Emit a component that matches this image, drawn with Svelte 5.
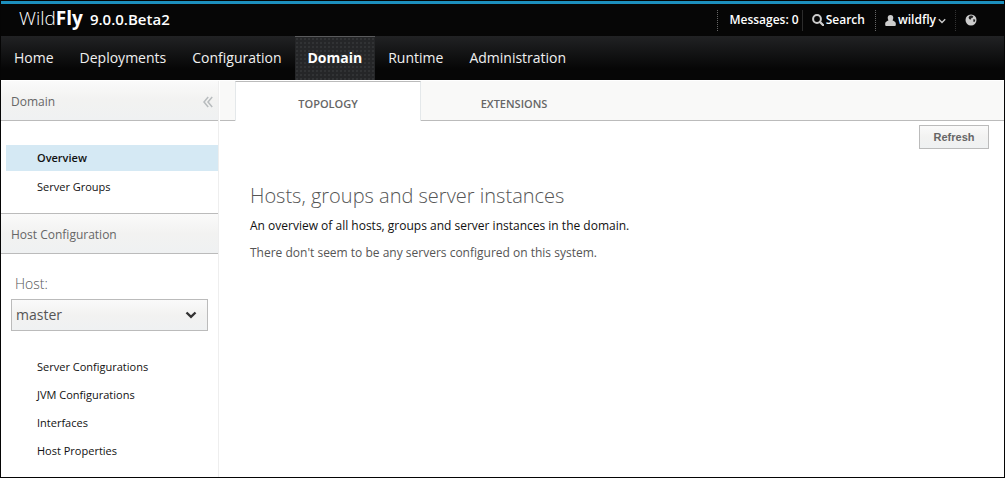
<script>
  const navItems = ['Home', 'Deployments', 'Configuration', 'Domain', 'Runtime', 'Administration'];
  const hostItems = ['Server Configurations', 'JVM Configurations', 'Interfaces', 'Host Properties'];
  const domainItems = ['Overview', 'Server Groups'];
  let section = $state('Domain');
  let page = $state('Overview');
  let tab = $state('TOPOLOGY');
  let host = $state('master');
</script>

<div class="console">
  <header>
    <div class="topbar">
      <div class="brand">
        <span class="logo">Wild<b>Fly</b></span>
        <span class="version">9.0.0.Beta2</span>
      </div>
      <div class="tools">
        <button class="tool messages">Messages: 0</button>
        <button class="tool search">
          <svg width="12" height="12" viewBox="0 0 12 12" aria-hidden="true">
            <circle cx="5" cy="5" r="3.9" fill="none" stroke="#ccc" stroke-width="2" />
            <path d="M8 8l3 3" stroke="#ccc" stroke-width="2.4" stroke-linecap="round" />
          </svg>
          Search
        </button>
        <button class="tool user">
          <svg width="11" height="11" viewBox="0 0 11 11" aria-hidden="true">
            <path d="M5.500 0C3.600 0 2.700 1.200 2.700 2.800c0 1.100.3 1.900.8 2.500L1.500 6.500C.5 7 .2 7.800.2 8.800V10q0 .9.9.9h8.800q.9 0 .9-.9V8.800C10.800 7.800 10.500 7 9.500 6.500L7.500 5.300c.5-.6.8-1.400.8-2.500C8.300 1.200 7.400 0 5.500 0z" fill="#ccc" />
          </svg>
          <span>wildfly</span>
          <svg class="caret" width="8" height="6" viewBox="0 0 8 6" aria-hidden="true">
            <path d="M.8 1.200L4 4.400 7.200 1.200" fill="none" stroke="#ccc" stroke-width="1.400" />
          </svg>
        </button>
        <button class="tool world" aria-label="Language">
          <svg width="12" height="12" viewBox="0 0 12 12" aria-hidden="true">
            <circle cx="6" cy="6" r="5.500" fill="#ccc" />
            <path d="M4.600 1.800L7 1.400l1.300 1.200-.6 1.200-1.300.3-.5 1.300-1.500-.2-.9-1.400zM8.200 5.200l2 .3-.2 2-1.500.6z" fill="#222" />
          </svg>
        </button>
      </div>
    </div>
    <nav class="mainnav">
      {#each navItems as item}
        <a href="#{item}" class:active={section === item} onclick={() => (section = item)}>{item}</a>
      {/each}
    </nav>
  </header>

  <div class="body">
    <aside>
      <div class="panel-title">
        <span>Domain</span>
        <button class="collapse" aria-label="Collapse">
          <svg width="10" height="12" viewBox="0 0 10 12" aria-hidden="true">
            <path d="M5.200 1L1 6l4.200 5M9.200 1L5 6l4.200 5" fill="none" stroke="#b8bcbe" stroke-width="1.500" />
          </svg>
        </button>
      </div>
      <nav class="menu first">
        {#each domainItems as item}
          <a href="#{item}" class:active={page === item} onclick={() => (page = item)}>{item}</a>
        {/each}
      </nav>
      <div class="panel-title second"><span>Host Configuration</span></div>
      <div class="host">
        <label for="host">Host:</label>
        <div class="select">
          <select id="host" bind:value={host}>
            <option>master</option>
          </select>
          <svg width="12" height="8" viewBox="0 0 12 8" aria-hidden="true">
            <path d="M1.500 1.500L6 5.800l4.500-4.300" fill="none" stroke="#333" stroke-width="2.400" />
          </svg>
        </div>
      </div>
      <nav class="menu hosts">
        {#each hostItems as item}
          <a href="#{item}" class:active={page === item} onclick={() => (page = item)}>{item}</a>
        {/each}
      </nav>
    </aside>

    <main>
      <div class="tabs" role="tablist">
        {#each ['TOPOLOGY', 'EXTENSIONS'] as name}
          <button role="tab" aria-selected={tab === name} class:active={tab === name} onclick={() => (tab = name)}>{name}</button>
        {/each}
      </div>
      <div class="actions"><button class="refresh">Refresh</button></div>
      <section>
        <h1>Hosts, groups and server instances</h1>
        <p class="lead">An overview of all hosts, groups and server instances in the domain.</p>
        <p>There don't seem to be any servers configured on this system.</p>
      </section>
    </main>
  </div>
</div>

<style>
  :global(body) {
    margin: 0;
  }
  .console,
  .console * {
    box-sizing: border-box;
  }
  .console {
    display: flex;
    flex-direction: column;
    min-height: 100vh;
    border: 1px solid #050505;
    background: #fff;
    color: #111;
    font: 12px/16px 'Open Sans', sans-serif;
  }
  button,
  select {
    margin: 0;
    padding: 0;
    border: 0;
    border-radius: 0;
    background: none;
    color: inherit;
    font: inherit;
  }
  a {
    color: inherit;
    text-decoration: none;
  }
  svg {
    display: block;
    flex: none;
  }
  .topbar {
    display: flex;
    justify-content: space-between;
    height: 35px;
    border-top: 3px solid #1c8fbd;
    background: #060606;
    color: #fff;
  }
  .brand {
    display: flex;
    align-items: baseline;
    gap: 7px;
    padding-left: 18px;
  }
  .logo {
    font-size: 19px;
    line-height: 28px;
    font-weight: 300;
  }
  .logo b {
    font-weight: 700;
  }
  .version {
    font-size: 15px;
    font-weight: 600;
  }
  .tools {
    display: flex;
    align-items: center;
    padding-right: 16px;
  }
  .tool {
    display: flex;
    align-items: center;
    gap: 2px;
    height: 21px;
    font-weight: 600;
    border-left: 1px dotted #666;
  }
  .messages {
    padding: 0 3px 0 11px;
  }
  .search {
    padding: 0 10px 0 9px;
    border-left: 1px solid #2c2c2c;
  }
  .user {
    padding: 0 9px;
  }
  .caret {
    margin-top: 2px;
  }
  .world {
    padding: 0 11px 0 9px;
    border-left-color: #333;
  }
  .mainnav {
    display: flex;
    height: 44px;
    background: linear-gradient(#212224, #060606 75%);
    color: #f0f0f0;
    font-size: 14px;
    font-weight: 500;
  }
  .mainnav a {
    padding: 0 13px;
    line-height: 42px;
    border-top: 1px solid transparent;
  }
  .mainnav .active {
    border-top-color: #5a5b5d;
    background: #252628 radial-gradient(#3e3f41 20%, transparent 30%) 0 0 / 4px 4px;
    color: #fff;
    font-weight: 700;
  }
  .body {
    display: flex;
    flex: 1;
    padding-top: 1px;
  }
  aside {
    width: 218px;
    flex: none;
    border-right: 1px solid #eee;
  }
  .panel-title {
    display: flex;
    align-items: center;
    justify-content: space-between;
    height: 40px;
    padding: 2px 5px 0 10px;
    border-bottom: 1px solid #bbb;
    background: linear-gradient(#fafafa, #f2f2f1 50%, #eff1f2);
    color: #666;
  }
  .second {
    height: 41px;
    border-top: 1px solid #bbb;
  }
  .menu {
    display: flex;
    flex-direction: column;
    padding-left: 5px;
    font-size: 11px;
  }
  .menu a {
    padding-left: 31px;
    line-height: 28px;
  }
  .first {
    gap: 3px;
    padding-top: 24px;
    padding-bottom: 13px;
  }
  .first a {
    line-height: 26px;
  }
  .menu .active {
    background: #d5e9f4;
    font-weight: 600;
  }
  .host {
    padding: 20px 10px 22px;
    color: #555;
    font-size: 14px;
  }
  .host label {
    display: block;
    padding-left: 4px;
    line-height: 20px;
    font-weight: 300;
  }
  .select {
    display: grid;
    align-items: center;
    margin-top: 5px;
  }
  .select > * {
    grid-area: 1 / 1;
  }
  .select svg {
    justify-self: end;
    margin-right: 11px;
    pointer-events: none;
  }
  select {
    appearance: none;
    width: 100%;
    height: 32px;
    padding: 0 4px;
    border: 1px solid #bbb;
    background: linear-gradient(#fafafa, #f2f2f1 50%, #eff1f2);
  }
  main {
    flex: 1;
    min-width: 0;
    padding-left: 1px;
  }
  .tabs {
    display: flex;
    height: 40px;
    padding-left: 15px;
    background: #f9f9f8;
    box-shadow: inset 0 -1px #bbb;
  }
  .tabs button {
    width: 186px;
    color: #666;
    font-size: 11px;
    font-weight: 600;
    padding-top: 5px;
  }
  .tabs .active {
    border: 1px solid #e4e8ea;
    border-top-color: #bbb;
    border-bottom: 0;
    background: #fff;
  }
  .actions {
    display: flex;
    justify-content: flex-end;
    padding: 4px 15px 0;
  }
  .refresh {
    width: 70px;
    height: 24px;
    border: 1px solid #bbb;
    background: linear-gradient(#fafafa, #f2f2f1 50%, #eff1f2);
    color: #666;
    font: bold 11px 'Liberation Sans', sans-serif;
  }
  section {
    padding: 33px 30px;
    color: #555;
  }
  h1 {
    margin: 0;
    font-size: 20px;
    line-height: 28px;
    font-weight: 300;
  }
  p {
    margin: 11px 0 0;
  }
  .lead {
    margin-top: 8px;
    color: #111;
  }
</style>
